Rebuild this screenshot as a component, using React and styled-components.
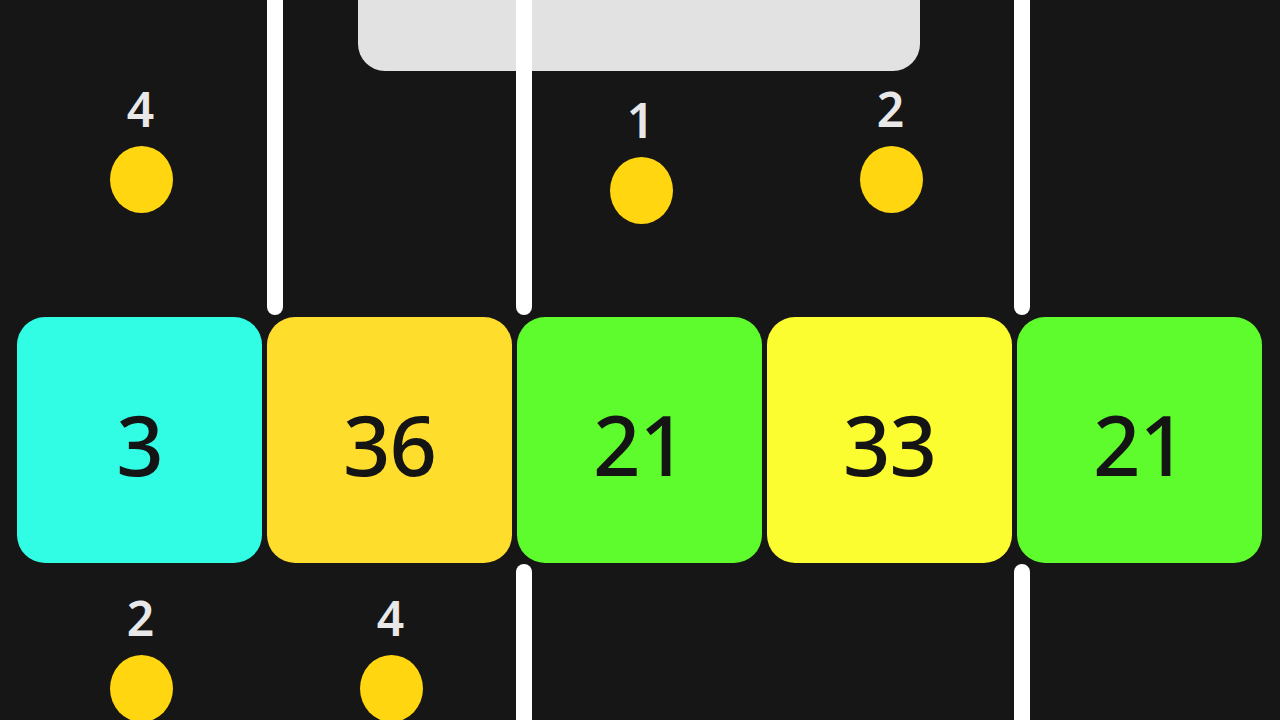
import React from 'react'
import styled, {createGlobalStyle} from 'styled-components'

const GlobalStyle = createGlobalStyle`
    html, body {
        margin: 0;
        padding: 0;
        background: #161616;
    }
    body {
        font-family: "Noto Sans", "DejaVu Sans", sans-serif;
    }
`

const Board = styled.div`
    position: relative;
    width: 1280px;
    height: 720px;
    overflow: hidden;
    background: #161616;
    display: flex;
    flex-direction: column;
`

const Banner = styled.div`
    width: 562px;
    height: 71px;
    margin-left: 358px;
    background: #e2e2e2;
    border-radius: 0 0 27px 27px;
    flex-shrink: 0;
`

const Lanes = styled.div`
    display: grid;
    grid-template-columns: repeat(5, 245px);
    column-gap: 5px;
    padding-left: 17px;
    height: ${props => props.$height}px;
    flex-shrink: 0;
`

const Coin = styled.div`
    display: flex;
    flex-direction: column;
    align-items: center;
    gap: 19px;
    margin-top: ${props => props.$offset}px;
    grid-column: ${props => props.$lane};
`

const CoinValue = styled.span`
    font-size: 48px;
    line-height: 36px;
    font-weight: 600;
    color: #e8e8e8;
    padding-left: 2px;
`

const Dot = styled.span`
    width: 63px;
    height: 67px;
    border-radius: 50%;
    background: #ffd60f;
    margin-left: 3px;
`

const Block = styled.div`
    display: flex;
    align-items: center;
    justify-content: center;
    border-radius: 28px;
    background: ${props => props.$color};
    color: #141414;
    font-size: 83px;
    font-weight: 500;
    letter-spacing: -1px;
    padding-top: 6px;
    box-sizing: border-box;
`

const Wall = styled.div`
    position: absolute;
    left: ${props => props.$x}px;
    top: ${props => props.$top}px;
    width: 16px;
    height: ${props => props.$height}px;
    border-radius: 8px;
    background: #ffffff;
`

const blocks = [
    {value: 3, color: '#30fde3'},
    {value: 36, color: '#ffdd2c'},
    {value: 21, color: '#5efc2d'},
    {value: 33, color: '#fbfd30'},
    {value: 21, color: '#5efc2d'},
]

const topCoins = [
    {lane: 1, value: 4, offset: 20},
    {lane: 3, value: 1, offset: 31},
    {lane: 4, value: 2, offset: 20},
]

const bottomCoins = [
    {lane: 1, value: 2, offset: 37},
    {lane: 2, value: 4, offset: 37},
]

const walls = [
    {x: 267, top: -20, height: 335},
    {x: 516, top: -20, height: 335},
    {x: 1014, top: -20, height: 335},
    {x: 516, top: 564, height: 180},
    {x: 1014, top: 564, height: 180},
]

const App = () => {
    return(
        <>
        <GlobalStyle />
        <Board>
            <Banner />
            <Lanes $height={246}>
                {topCoins.map(c =>
                    <Coin key={c.lane} $lane={c.lane} $offset={c.offset}>
                        <CoinValue>{c.value}</CoinValue>
                        <Dot />
                    </Coin>
                )}
            </Lanes>
            <Lanes $height={246}>
                {blocks.map((b, i) =>
                    <Block key={i} $color={b.color}>{b.value}</Block>
                )}
            </Lanes>
            <Lanes $height={157}>
                {bottomCoins.map(c =>
                    <Coin key={c.lane} $lane={c.lane} $offset={c.offset}>
                        <CoinValue>{c.value}</CoinValue>
                        <Dot />
                    </Coin>
                )}
            </Lanes>
            {walls.map((w, i) =>
                <Wall key={i} $x={w.x} $top={w.top} $height={w.height} />
            )}
        </Board>
        </>
    );
}

export default App
